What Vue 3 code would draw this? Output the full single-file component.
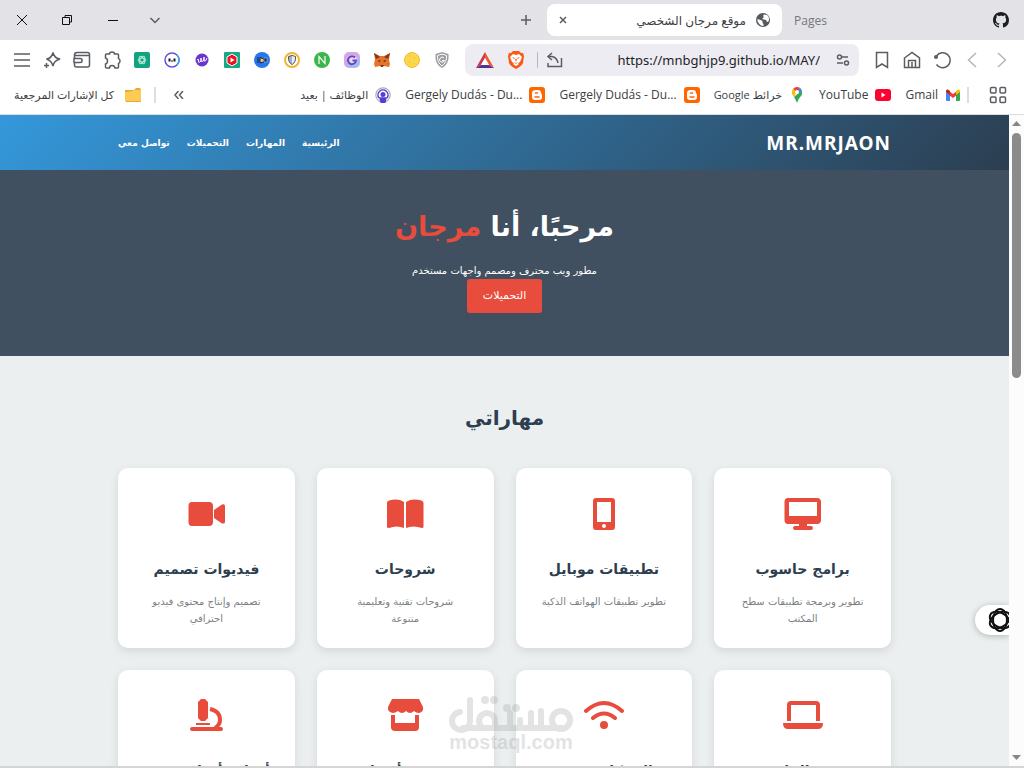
<template>
  <div class="browser">
    <header class="tabs">
      <div class="window-buttons">
        <button aria-label="إغلاق"><svg width="12" height="12" viewBox="0 0 12 12"><path d="M1 1l10 10M11 1L1 11" /></svg></button>
        <button aria-label="استعادة"><svg width="12" height="12" viewBox="0 0 12 12"><path d="M1.500 3.500h7v7h-7zM4 3V1.500h6.500V8H9" /></svg></button>
        <button aria-label="تصغير"><svg width="12" height="12" viewBox="0 0 12 12"><path d="M1 6.500h10" /></svg></button>
        <button class="grey" aria-label="بحث في علامات التبويب"><svg width="12" height="12" viewBox="0 0 12 12"><path d="M1.500 4L6 8.500 10.500 4" /></svg></button>
      </div>
      <button class="new-tab" aria-label="علامة تبويب جديدة"><svg width="12" height="12" viewBox="0 0 12 12"><path d="M6 1v10M1 6h10" /></svg></button>
      <div class="tab">
        <button class="close" aria-label="إغلاق علامة التبويب"><svg width="8" height="8" viewBox="0 0 8 8"><path d="M1 1l6 6M7 1L1 7" /></svg></button>
        <span class="tab-title" dir="rtl">موقع مرجان الشخصي</span>
        <svg class="globe" width="14" height="14" viewBox="0 0 14 14">
          <circle cx="7" cy="7" r="7" fill="#55585c" />
          <path d="M1.500 6l3 1 2 1v2l1 1v2q-4 0-6-5zM8 1.500L7 3l1 1-2 2 4 1 1 2 1.500-.5Q14 4 11 2z" fill="#fff" />
        </svg>
      </div>
      <span class="tab-idle">Pages</span>
      <svg class="github" width="16" height="16" viewBox="0 0 16 16">
        <path fill="#1b1f23" d="M8 0C3.580 0 0 3.580 0 8c0 3.540 2.290 6.530 5.470 7.590.4.070.55-.17.55-.38 0-.19-.01-.82-.01-1.490-2.010.37-2.530-.49-2.690-.94-.09-.23-.48-.94-.82-1.130-.28-.15-.68-.52-.01-.53.63-.01 1.080.58 1.230.82.72 1.210 1.870.87 2.330.66.070-.52.28-.87.51-1.070-1.780-.2-3.640-.89-3.640-3.950 0-.87.31-1.590.82-2.150-.08-.2-.36-1.020.08-2.120 0 0 .67-.21 2.200.82.64-.18 1.320-.27 2-.27s1.360.09 2 .27c1.530-1.040 2.200-.82 2.200-.82.44 1.100.16 1.920.08 2.120.51.56.82 1.270.82 2.150 0 3.070-1.870 3.750-3.650 3.950.29.25.54.73.54 1.480 0 1.070-.01 1.930-.01 2.200 0 .21.15.46.55.38A8 8 0 0 0 16 8c0-4.420-3.580-8-8-8z" />
      </svg>
    </header>

    <div class="toolbar">
      <div class="tools">
        <button aria-label="القائمة"><svg width="18" height="16" viewBox="0 0 18 16"><path d="M1 2h16M1 8h16M1 14h16" /></svg></button>
        <button aria-label="المساعد"><svg width="18" height="18" viewBox="0 0 18 18"><path d="M10 1.500q1 5.500 7 6.500-6 1.500-7 7-1.500-5.500-6.500-7Q9 7 10 1.500zM3.500 12v5M1 14.500h5" /></svg></button>
        <button aria-label="المحفظة"><svg width="18" height="18" viewBox="0 0 18 18"><path d="M1.500 7V4q0-2.500 2.500-2.500h10.500q2 0 2 2V14q0 2-2 2H3.500q-2 0-2-2v-2M2 4.500h14.500M1 7.500h6q2 0 2 1.500v1q0 1.500-2 1.500H1z" /></svg></button>
        <button aria-label="الإضافات"><svg width="18" height="18" viewBox="0 0 18 18"><path d="M3.500 3h3q0-2 2.500-2t2.500 2h3q1 0 1 1v3.500q1.500.5 1.500 2.500t-1.500 2.500V16q0 1-1 1H12q-.5-2.500-3-2.500T6.500 17h-3q-1 0-1-1v-3q2-.5 2-3t-2-3V4q0-1 1-1z" /></svg></button>
        <button v-for="e in extensions" :key="e" :aria-label="e">
          <svg width="16" height="16" viewBox="0 0 16 16" class="filled">
            <template v-if="e === 'GPT'">
              <rect width="16" height="16" rx="2" fill="#10a37f" />
              <g fill="none" stroke="#b8e6d8"><ellipse cx="8" cy="8" rx="4" ry="2" /><ellipse cx="8" cy="8" rx="4" ry="2" transform="rotate(60 8 8)" /><ellipse cx="8" cy="8" rx="4" ry="2" transform="rotate(120 8 8)" /></g>
            </template>
            <template v-else-if="e === 'Bot'">
              <circle cx="8" cy="8" r="7" fill="#fff" stroke="#6450e8" stroke-width="1.500" />
              <path d="M13 3a7 7 0 0 1 0 10" fill="none" stroke="#38aaf0" stroke-width="1.500" />
              <path d="M5.500 6.500v3M10.500 6.500v3" stroke="#161630" stroke-width="2" /><path d="M7 9h2" stroke="#161630" />
            </template>
            <template v-else-if="e === 'Writer'">
              <circle cx="8" cy="8" r="6.500" fill="#6a35cc" />
              <path d="M3 8q2-2 1.500 1t2.500 0V6v3q2 2 3-2V5v4q2 1 3-3" fill="none" stroke="#fff" />
            </template>
            <template v-else-if="e === 'Video'">
              <rect width="16" height="16" rx="1" fill="#13a886" />
              <path d="M8 2l5 3v6l-5 3-5-3V5z" fill="#f01024" stroke="#fff" /><path d="M6.500 5.500l4 2.500-4 2.500z" fill="#fff" />
            </template>
            <template v-else-if="e === 'IQ'">
              <circle cx="8" cy="8" r="8" fill="#2776ee" />
              <path d="M4 5v6M6 5.500l4 1.500v3l-4 1z" stroke="#14213b" fill="#f2c08a" /><path d="M10 6h3v4h-3z" fill="#172b4a" stroke="#bfd9ff" stroke-width=".5" />
            </template>
            <template v-else-if="e === 'Guard'">
              <circle cx="8" cy="8" r="7" fill="#fff" stroke="#f6b432" stroke-width="2" />
              <path d="M4.500 4.500L8 3.500l3.500 1q.5 6-3.500 8-4-2-3.500-8z" fill="#a8b1bb" stroke="#4b5661" /><path d="M8 4v8q3-2 3-7z" fill="#e8edf2" />
            </template>
            <template v-else-if="e === 'Note'">
              <circle cx="8" cy="8" r="8" fill="#3cb54a" />
              <path d="M5 12V4.500l6 7V4" fill="none" stroke="#fff" stroke-width="1.200" />
            </template>
            <template v-else-if="e === 'Grab'">
              <rect width="16" height="16" rx="5" fill="#d8a5ea" /><path d="M1 11Q7 18 15 13V5q-3 7-14 6z" fill="#8ac6f5" />
              <circle cx="8" cy="8" r="5" fill="#e9dcfa" />
              <path d="M11 5.500a4 4 0 1 0 1 3H8.500" fill="none" stroke="#6747b8" stroke-width="2" />
            </template>
            <template v-else-if="e === 'Fox'">
              <path d="M0 1l6 3h4l6-3-1 7 1 4-1 3-5-1H6l-5 1-1-3 1-4z" fill="#e8722a" />
              <path d="M0 1l6 4-4 2zM16 1l-6 4 4 2zM6 13h4l-1 2H7z" fill="#7b3a17" /><path d="M4 8l3 1-2 1zM12 8L9 9l2 1z" fill="#24303d" />
            </template>
            <template v-else-if="e === 'Coin'">
              <circle cx="8" cy="8" r="7.500" fill="#fcd64b" stroke="#e9bd32" /><path d="M5 4h1M10 6h1M5 10h1M9 12h1" stroke="#e2b22c" />
            </template>
            <template v-else>
              <path d="M1.500 2L8 0l6.500 2q1 10-6.500 14Q.5 12 1.500 2z" fill="#9b9da0" /><path d="M3.500 3.500L8 2l4.500 1.500q.5 7-4.500 10.500-5-3.500-4.500-10.500z" fill="none" stroke="#fff" />
              <path d="M10 6a2.500 2.500 0 1 0 .5 2.500H8" fill="none" stroke="#fff" />
            </template>
          </svg>
        </button>
      </div>

      <div class="address">
        <svg width="18" height="16" viewBox="0 0 18 16" class="filled">
          <path d="M9 0L0 16l5-3 4-7z" fill="#c53a4e" /><path d="M9 0l9 16-5-3-4-7z" fill="#f1582c" /><path d="M0 16h18l-5-3H5z" fill="#5b3190" /><path d="M9 6l4 7H5z" fill="#fff" />
        </svg>
        <svg width="16" height="18" viewBox="0 0 16 18" class="filled">
          <path d="M5 0h6l2 2 2 0 1 3-1 7q-1 3-7 6-6-3-7-6L0 5l1-3h2z" fill="#fb5a13" />
          <path d="M5 3l3 1 3-1 3 3-2 5-2 1 1 1-3 2-3-2 1-1-2-1-2-5z" fill="#fff" /><path d="M4 6l3 1-1 1zM12 6L9 7l1 1zM7 8h2l-1 3zM6 11l2 1 2-1-2 2z" fill="#fb5a13" />
        </svg>
        <i class="bar"></i>
        <svg width="18" height="16" viewBox="0 0 18 16"><path d="M6 1L2 4.500 6 8M2 4.500h4q5 1 6 6.500M2 11v3.500h13.500V6" /></svg>
        <input v-model="url" type="text" dir="ltr" aria-label="العنوان" />
        <svg class="dark" width="14" height="12" viewBox="0 0 14 12"><circle cx="3.500" cy="3" r="2" /><path d="M6 3h6M1 9h6" /><circle cx="10.500" cy="9" r="2" /></svg>
      </div>

      <div class="nav-buttons">
        <button aria-label="إشارة مرجعية"><svg width="18" height="18" viewBox="0 0 18 18"><path d="M3.500 1.500h11v15L9 13l-5.500 3.500z" /></svg></button>
        <button aria-label="الصفحة الرئيسية"><svg width="18" height="18" viewBox="0 0 18 18"><path d="M1.500 7L9 1.500 16.500 7v9.500h-15zM5.500 16V9.500h7V16M9 11v5" /></svg></button>
        <button aria-label="إعادة التحميل"><svg width="18" height="18" viewBox="0 0 18 18"><path d="M3.500 5a7.500 7.500 0 1 1 0 8.500" /><circle cx="3" cy="6" r="2" class="dot" /></svg></button>
        <button class="faded" aria-label="الأمام"><svg width="18" height="18" viewBox="0 0 18 18"><path d="M13 2L5.500 9l7.500 7" /></svg></button>
        <button class="faded" aria-label="الرجوع"><svg width="18" height="18" viewBox="0 0 18 18"><path d="M5 2l7.500 7L5 16" /></svg></button>
      </div>
    </div>

    <nav class="bookmarks" aria-label="الإشارات المرجعية">
      <a href="#" class="all" dir="ltr">
        <span dir="rtl">كل الإشارات المرجعية</span>
        <svg width="16" height="14" viewBox="0 0 16 14" class="filled"><path d="M0 2h9l2-2h4l1 2v12H1L0 12z" fill="#e9a92c" /><path d="M0 4q6 0 9-2h7v11H1q-1 0-1-2z" fill="#fccb55" /></svg>
      </a>
      <i class="bar"></i>
      <button class="more" aria-label="المزيد"><svg width="10" height="8" viewBox="0 0 10 8"><path d="M4.500 0L1 4l3.500 4M9 0L5.500 4 9 8" /></svg></button>
      <div class="links">
        <a v-for="(b, i) in bookmarks" :key="i" href="#">
          <span :dir="b.dir">{{ b.name }}</span>
          <svg width="16" height="16" viewBox="0 0 16 16" class="filled">
            <template v-if="b.icon === 'jobs'">
              <circle cx="8" cy="8" r="7.200" fill="none" stroke="#aaaeb8" stroke-width="1.200" />
              <path d="M4 11a5 5 0 1 1 8 0M6 15h4l1-4H5z" fill="none" stroke="#583dd0" stroke-width="1.500" /><circle cx="8" cy="7.500" r="2.500" fill="#583dd0" /><path d="M6 11h4v5H6z" fill="#583dd0" />
            </template>
            <template v-else-if="b.icon === 'blogger'">
              <rect width="16" height="16" rx="3" fill="#ff6600" />
              <path d="M7 3h2q3 0 3 3 1 1 1 2v2q0 3-3 3H6q-3 0-3-3V6q0-3 4-3z" fill="#fff" /><path d="M6.500 6h2M6 10h4" stroke="#ff6600" stroke-width="1.500" stroke-linecap="round" />
            </template>
            <template v-else-if="b.icon === 'maps'">
              <path d="M8 0a5 5 0 0 0-4 2l4 4 3-5q-1-1-3-1z" fill="#ea4335" /><path d="M11 .7L8 5l4 3q1-1 1-3 0-3-2-4.300z" fill="#4285f4" />
              <path d="M4 2Q2 4 3 7l2 3 3-5z" fill="#fbbc04" /><path d="M5 10l7-6q2 3 0 5-3 3-4 7-1-3-3-6z" fill="#34a853" /><circle cx="8" cy="5" r="2" fill="#fff" />
            </template>
            <template v-else-if="b.icon === 'youtube'">
              <rect y="2" width="16" height="12" rx="3" fill="#f03" /><path d="M6.500 5.500l4 2.500-4 2.500z" fill="#fff" />
            </template>
            <template v-else>
              <path d="M1 4l4 3v7H2q-1 0-1-1z" fill="#4285f4" /><path d="M15 4l-4 3v7h3q1 0 1-1z" fill="#34a853" /><path d="M4 4l4 3 4-3v4l-4 3-4-3z" fill="#ea4335" />
              <path d="M1 4q0-2 2-1.500l2 1.500v4L1 5z" fill="#c5221f" /><path d="M15 4q0-2-2-1.500L11 4v4l4-3z" fill="#fbbc04" />
            </template>
          </svg>
        </a>
      </div>
      <i class="bar"></i>
      <button class="apps" aria-label="التطبيقات"><svg width="18" height="18" viewBox="0 0 18 18"><rect x="1.500" y="1.500" width="5.500" height="5.500" rx="1" /><rect x="11" y="1.500" width="5.500" height="5.500" rx="1" /><rect x="1.500" y="11" width="5.500" height="5.500" rx="1" /><rect x="11" y="11" width="5.500" height="5.500" rx="1" /></svg></button>
    </nav>

    <div class="viewport">
      <div class="page" dir="rtl">
        <div class="navbar">
          <a class="logo" href="#">MR.MRJAON</a>
          <nav>
            <a v-for="item in menu" :key="item" href="#">{{ item }}</a>
          </nav>
        </div>

        <section class="hero">
          <h1>مرحبًا، أنا <span>مرجان</span></h1>
          <p>مطور ويب محترف ومصمم واجهات مستخدم</p>
          <a class="btn" href="#">التحميلات</a>
        </section>

        <section class="skills">
          <h2>مهاراتي</h2>
          <div class="grid">
            <article v-for="skill in skills" :key="skill.title" class="card">
              <svg width="40" height="36" viewBox="0 0 40 36">
                <path v-if="skill.icon === 'desktop'" fill-rule="evenodd" d="M5 2h29q4 0 4 4v18q0 4-4 4h-10v2h4q2 0 2 2t-2 2H12q-2 0-2-2t2-2h4v-2H5q-3.500 0-3.500-4V6Q1.500 2 5 2zM6 6v14h28V6z" />
                <path v-else-if="skill.icon === 'phone'" fill-rule="evenodd" d="M12 2h16q3 0 3 3v26q0 3-3 3H12q-3 0-3-3V5q0-3 3-3zm1 4v20h14V6zM20 28a2 2 0 1 0 0 4 2 2 0 0 0 0-4z" />
                <path v-else-if="skill.icon === 'book'" d="M2 7q0-2 2-2.500Q13 2 19 6v26Q12 29 4 32q-2 0-2-1zM38.500 7q0-2-2-2.500Q27 2 21 6v26q7-3 16 0 1.500 0 1.500-1z" />
                <path v-else-if="skill.icon === 'video'" d="M6 6h17q4 0 4 4v16q0 4-4 4H6q-3.500 0-3.500-4V10q0-4 3.500-4zM28 14l8-5.500q3-1 3 1.500v16q0 2-3 1.500L28 22z" />
                <path v-else-if="skill.icon === 'laptop'" fill-rule="evenodd" d="M4 23V7q0-4 4-4h25q4 0 4 4v16h-4V7H8v16zM0 25h40q0 6-5 6H5q-5 0-5-6z" />
                <g v-else-if="skill.icon === 'wifi'">
                  <path d="M2 13q18-16 36 0M9 20q11-9 22 0" class="arc" /><circle cx="20" cy="27" r="4" />
                </g>
                <path v-else-if="skill.icon === 'store'" d="M7 1h27l4 8q1 5-4 6-3 0-5-2-2 2-4 2t-4-2q-2 2-4 2t-4-2q-3 2-5 2-6-1-5-6zM6 17h4v8h20v-8h4v12q0 4-4 4H10q-4 0-4-4z" />
                <g v-else transform="translate(2)">
                  <path d="M10 4l3-3h4l3 3v16l-3 3h-4l-3-3zM8 25h14v2H8zM4 29h29q2 0 2 2t-2 2H4q-2 0-2-2t2-2z" />
                  <path d="M22 11q10 2 10 11 0 5-5 8" class="arc butt" />
                </g>
              </svg>
              <h3>{{ skill.title }}</h3>
              <p>{{ skill.text }}</p>
            </article>
          </div>
        </section>
        <button class="assistant" aria-label="المساعد" dir="ltr">
          <svg width="26" height="26" viewBox="0 0 26 26"><g fill="none" stroke="#111" stroke-width="2"><ellipse v-for="a in 3" :key="a" cx="13" cy="13" rx="11" ry="7" :transform="`rotate(${a * 60 + 30} 13 13)`" /></g></svg>
        </button>
        <div class="watermark" dir="ltr">
          <svg width="124" height="36" viewBox="0 0 124 36">
            <path d="M11 16A9 9 0 1 0 21 25V4M14 32H113M34 32a8 8 0 1 1 12-7v7M61 17v15M71 24v8M82 17v15M92 15v17" />
            <circle cx="112" cy="24" r="9" />
            <g class="dots"><circle cx="36" cy="4" r="4" /><circle cx="45" cy="4" r="4" /><circle cx="58" cy="12" r="4" /><circle cx="67" cy="12" r="4" /></g>
          </svg>
          <span>mostaql.com</span>
        </div>
      </div>
      <div class="scrollbar">
        <svg width="9" height="5" viewBox="0 0 9 5"><path d="M0 5l4.500-5L9 5z" /></svg>
        <div class="thumb"></div>
        <svg width="9" height="5" viewBox="0 0 9 5"><path d="M0 0l4.500 5L9 0z" /></svg>
      </div>
    </div>
    <div class="edge"></div>
  </div>
</template>

<script setup>
import { ref } from 'vue'

const url = ref('https://mnbghjp9.github.io/MAY/')

const extensions = ['GPT', 'Bot', 'Writer', 'Video', 'IQ', 'Guard', 'Note', 'Grab', 'Fox', 'Coin', 'Shield']

const bookmarks = [
  { name: 'الوظائف | بعيد', icon: 'jobs', dir: 'rtl' },
  { name: 'Gergely Dudás - Du...', icon: 'blogger', dir: 'ltr' },
  { name: 'Gergely Dudás - Du...', icon: 'blogger', dir: 'ltr' },
  { name: 'خرائط Google', icon: 'maps', dir: 'rtl' },
  { name: 'YouTube', icon: 'youtube', dir: 'ltr' },
  { name: 'Gmail', icon: 'gmail', dir: 'ltr' },
]

const menu = ['الرئيسية', 'المهارات', 'التحميلات', 'تواصل معي']

const skills = [
  { icon: 'desktop', title: 'برامج حاسوب', text: 'تطوير وبرمجة تطبيقات سطح المكتب' },
  { icon: 'phone', title: 'تطبيقات موبايل', text: 'تطوير تطبيقات الهواتف الذكية' },
  { icon: 'book', title: 'شروحات', text: 'شروحات تقنية وتعليمية متنوعة' },
  { icon: 'video', title: 'فيديوات تصميم', text: 'تصميم وإنتاج محتوى فيديو احترافي' },
  { icon: 'laptop', title: 'تقنية الحاسب', text: '' },
  { icon: 'wifi', title: 'الشبكات WIFI', text: '' },
  { icon: 'store', title: 'متجر وأسعار', text: '' },
  { icon: 'microscope', title: 'أخبار وأبحاث تقنية', text: '' },
]
</script>

<style>
body {
  margin: 0;
}
</style>

<style scoped>
* {
  box-sizing: border-box;
}

.browser {
  height: 100vh;
  display: flex;
  flex-direction: column;
  overflow: hidden;
  background: #fff;
  color: #3c3e42;
  font-family: "Open Sans", "Noto Sans", "DejaVu Sans", sans-serif;
  font-size: 12px;
}

button {
  display: flex;
  align-items: center;
  justify-content: center;
  padding: 0;
  border: 0;
  background: none;
}

a {
  color: inherit;
  text-decoration: none;
}

svg {
  display: block;
  flex: none;
}

.tabs svg:not(.globe):not(.github),
.tools svg:not(.filled),
.address svg:not(.filled),
.nav-buttons svg,
.bookmarks svg:not(.filled) {
  fill: none;
  stroke: #5a5d62;
  stroke-width: 1.5;
}

.tabs {
  flex: none;
  height: 40px;
  display: flex;
  align-items: center;
  background: #e3e2e7;
}

.window-buttons {
  display: flex;
  flex: 1;
}

.window-buttons button {
  width: 46px;
  height: 40px;
}

.tabs .window-buttons button:not(.grey) svg {
  stroke: #111;
  stroke-width: 1;
}

.window-buttons button:first-child {
  width: 44px;
}

.window-buttons .grey {
  width: 38px;
}

.new-tab {
  width: 42px;
  height: 40px;
}

.tab {
  width: 235px;
  height: 32px;
  display: flex;
  align-items: center;
  gap: 10px;
  padding: 0 12px;
  border-radius: 8px;
  background: #fff;
}

.tab-title {
  flex: 1;
  white-space: nowrap;
  font-size: 12px;
}

.tab-idle {
  width: 199px;
  padding-left: 12px;
  color: #75777b;
}

.github {
  margin: 0 15px 0 12px;
}

.toolbar {
  flex: none;
  height: 40px;
  display: flex;
  align-items: center;
  padding: 0 7px;
  gap: 8px;
}

.tools,
.nav-buttons {
  display: flex;
}

.tools button,
.nav-buttons button {
  width: 30px;
  height: 32px;
}

.nav-buttons .dot {
  fill: #5a5d62;
  stroke: none;
}

.nav-buttons .faded svg {
  stroke: #b4b6b9;
}

.address {
  flex: 1;
  min-width: 0;
  height: 32px;
  display: flex;
  align-items: center;
  gap: 10px;
  padding: 0 9px 0 11px;
  border-radius: 8px;
  background: #edecf2;
}

.address svg:first-child {
  margin-right: 4px;
}

.address .bar {
  width: 1px;
  height: 16px;
  margin: 0 -2px 0 3px;
  background: #b6b6bc;
}

.address input {
  flex: 1;
  min-width: 0;
  padding: 0;
  margin-right: 6px;
  border: 0;
  outline: 0;
  background: none;
  color: #1e2328;
  text-align: right;
  font: 13px "Noto Sans", sans-serif;
}

.address .dark {
  stroke: #33363a;
}

.bookmarks {
  flex: none;
  height: 35px;
  display: flex;
  align-items: center;
  padding: 0 17px 5px 14px;
  border-bottom: 1px solid #dddde0;
}

.bookmarks a {
  display: flex;
  align-items: center;
  gap: 7px;
  white-space: nowrap;
}

.bookmarks .all {
  gap: 11px;
}

.bookmarks [dir="rtl"] {
  font-size: 11px;
}

.bookmarks .bar {
  width: 2px;
  height: 16px;
  margin: 0 8px 0 13px;
  background: #dddde2;
}

.bookmarks .links + .bar {
  margin-left: 6px;
  margin-right: 20px;
}

.more {
  width: 30px;
  height: 24px;
}

.links {
  flex: 1;
  display: flex;
  justify-content: flex-end;
  gap: 14px;
}

.viewport {
  flex: 1;
  min-height: 0;
  display: flex;
}

.page {
  position: relative;
  flex: 1;
  min-width: 0;
  overflow: hidden;
  background: #ebeff0;
  color: #fff;
  font-family: "DejaVu Sans", sans-serif;
}

.navbar {
  height: 55px;
  display: flex;
  align-items: center;
  justify-content: space-between;
  padding: 0 118px;
  background: linear-gradient(135deg, #3498db, #2c3e50);
}

.logo {
  font: bold 19px "Noto Sans", sans-serif;
  letter-spacing: 1px;
}

.navbar nav {
  display: flex;
  gap: 17px;
  font-size: 9px;
  font-weight: bold;
}

.hero {
  height: 186px;
  padding-top: 37px;
  text-align: center;
  background: #405060;
}

.hero h1 {
  margin: 0 0 15px;
  font-size: 27px;
  line-height: 40px;
}

.hero h1 span {
  color: #e74c3c;
}

.hero p {
  margin: 0;
  font-size: 10px;
  line-height: 17px;
}

.btn {
  display: inline-block;
  padding: 0 16px;
  border-radius: 3px;
  background: #e74c3c;
  font-size: 11px;
  line-height: 34px;
}

.skills {
  padding: 44px 118px;
  text-align: center;
  color: #2c3e50;
}

.skills h2 {
  margin: 0 0 32px;
  font-size: 20px;
  line-height: 36px;
}

.grid {
  display: grid;
  grid-template-columns: repeat(4, minmax(0, 1fr));
  gap: 22px;
}

.card {
  height: 180px;
  padding: 28px 25px 20px;
  border-radius: 10px;
  background: #fff;
  box-shadow: 0 3px 10px rgba(0, 0, 0, 0.1);
}

.card svg {
  margin: 0 auto 25px;
  fill: #e74c3c;
}

.card .arc {
  fill: none;
  stroke: #e74c3c;
  stroke-width: 4;
  stroke-linecap: round;
}

.card .butt {
  stroke-linecap: butt;
}

.card h3 {
  display: flex;
  justify-content: center;
  margin: 0 0 12px;
  font-size: 14px;
  line-height: 24px;
  white-space: nowrap;
}

.card p {
  margin: 0;
  color: #7b7f83;
  font-size: 10px;
  line-height: 17px;
}

.assistant {
  position: absolute;
  right: 0;
  bottom: 131px;
  width: 34px;
  height: 30px;
  padding-left: 12px;
  justify-content: flex-start;
  overflow: hidden;
  border-radius: 15px 0 0 15px;
  background: #fff;
  box-shadow: 0 1px 6px rgba(0, 0, 0, 0.25);
}

.watermark {
  position: absolute;
  left: 449px;
  bottom: 14px;
  width: 124px;
  color: #999c9e;
  opacity: 0.27;
  text-align: center;
  font: bold 20px/20px "Liberation Sans", sans-serif;
}

.watermark svg {
  overflow: visible;
  fill: none;
  stroke: #999c9e;
  stroke-width: 6;
  stroke-linecap: round;
}

.watermark .dots {
  fill: #999c9e;
  stroke: none;
}

.scrollbar {
  width: 15px;
  display: flex;
  flex-direction: column;
  align-items: center;
  padding: 6px 0;
  background: #fcfcfc;
}

.scrollbar svg {
  fill: #858585;
}

.thumb {
  width: 9px;
  height: 245px;
  margin: 7px 0 auto;
  border-radius: 5px;
  background: #8b8b8b;
}

.edge {
  flex: none;
  height: 2px;
  background: #d5d5d6;
}
</style>
